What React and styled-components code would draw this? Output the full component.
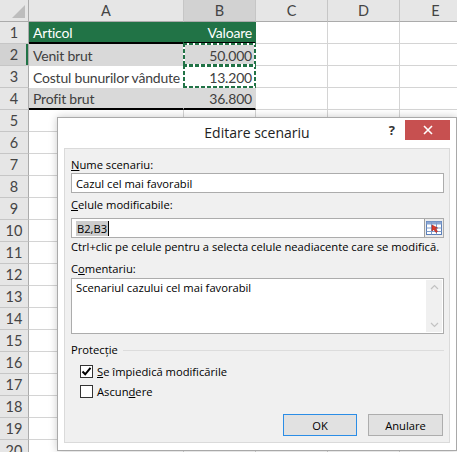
import React from "react"
import styled, { createGlobalStyle, css } from "styled-components"

const GREEN = "#217346"
const GRID_LINE = "#d4d4d4"

const GlobalStyle = createGlobalStyle`
  html, body {
    margin: 0;
    padding: 0;
    background: #fff;
  }
  body {
    overflow: hidden;
  }
`

const Sheet = styled.div`
  position: relative;
  width: 457px;
  height: 452px;
  overflow: hidden;
  background: #fff;
  font-family: Lato, "Liberation Sans", sans-serif;
`

const Grid = styled.div`
  display: grid;
  grid-template-columns: 29px 155px 72px 72px 72px 72px;
  grid-auto-rows: 22px;
`

const Corner = styled.div`
  position: relative;
  box-sizing: border-box;
  background: #e6e6e6;
  border-right: 1px solid #ababab;
  border-bottom: 1px solid #ababab;

  &::after {
    content: "";
    position: absolute;
    right: 3px;
    bottom: 3px;
    border-style: solid;
    border-width: 0 0 13px 13px;
    border-color: transparent transparent #bdbdbd transparent;
  }
`

const ColHead = styled.div`
  box-sizing: border-box;
  display: flex;
  align-items: center;
  justify-content: center;
  background: ${p => (p.$active ? "#d2d2d2" : "#e6e6e6")};
  border-right: 1px solid #c6c6c6;
  border-bottom: 1px solid #ababab;
  color: #444;
  font-size: 14.5px;
`

const RowHead = styled.div`
  box-sizing: border-box;
  display: flex;
  align-items: center;
  justify-content: center;
  background: ${p => (p.$active ? "#d2d2d2" : "#e6e6e6")};
  border-right: 1px solid #ababab;
  border-bottom: 1px solid #c6c6c6;
  color: #444;
  font-size: 14.5px;
  ${p => p.$active && css`box-shadow: inset -2px 0 0 ${GREEN};`}
`

const fills = {
  head: GREEN,
  gray: "#d9d9d9",
  white: "#fff",
}

const Cell = styled.div`
  position: relative;
  box-sizing: border-box;
  display: flex;
  align-items: center;
  justify-content: ${p => (p.$right ? "flex-end" : "flex-start")};
  padding: 1px 3px 0 4px;
  white-space: nowrap;
  overflow: visible;
  font-size: 14px;
  letter-spacing: -0.2px;
  background: ${p => (p.$fill ? fills[p.$fill] : "#fff")};
  color: ${p => (p.$fill === "head" ? "#fff" : "#404040")};
  border-right: 1px solid ${p => (p.$fill ? fills[p.$fill] : GRID_LINE)};
  border-bottom: ${p =>
    p.$rule ? "2px solid #000" : `1px solid ${p.$fill ? fills[p.$fill] : GRID_LINE}`};

  ${p => p.$ants && css`
    &::after {
      content: "";
      position: absolute;
      inset: -1px -1px -1px -1px;
      pointer-events: none;
      background:
        repeating-linear-gradient(90deg, ${GREEN} 0 4px, #fff 4px 6px) top / 100% 2px no-repeat,
        repeating-linear-gradient(90deg, ${GREEN} 0 4px, #fff 4px 6px) bottom / 100% 2px no-repeat,
        repeating-linear-gradient(180deg, ${GREEN} 0 4px, #fff 4px 6px) left / 2px 100% no-repeat,
        repeating-linear-gradient(180deg, ${GREEN} 0 4px, #fff 4px 6px) right / 2px 100% no-repeat;
    }
  `}
`

/* ---------- dialog ---------- */

const Dialog = styled.div`
  position: absolute;
  left: 57px;
  top: 117px;
  width: 400px;
  height: 334px;
  box-sizing: border-box;
  display: flex;
  flex-direction: column;
  padding: 0 6px 7px;
  background: #fff;
  border: 1px solid #a9a9a9;
  box-shadow: 0 0 8px rgba(0, 0, 0, 0.22);
  font-family: "Open Sans", "Noto Sans", sans-serif;
  font-size: 11.2px;
  color: #000;
`

const TitleBar = styled.div`
  height: 30px;
  display: grid;
  grid-template-columns: 1fr auto 1fr;
  align-items: start;
`

const Title = styled.div`
  grid-column: 2;
  line-height: 30px;
  font-size: 14px;
  color: #222;
`

const TitleControls = styled.div`
  grid-column: 3;
  justify-self: end;
  display: flex;
  align-items: center;
  gap: 10px;
  margin-top: 2px;
`

const Help = styled.span`
  font-size: 13px;
  font-weight: 700;
  color: #333;
`

const Close = styled.div`
  width: 45px;
  height: 20px;
  display: flex;
  align-items: center;
  justify-content: center;
  background: #c75050;
`

const Panel = styled.div`
  flex: 1;
  display: flex;
  flex-direction: column;
  padding: 8px 5px 0 6px;
  background: #f0f0f0;
  border: 1px solid #dadada;
`

const Label = styled.div`
  line-height: 16px;
  margin-top: ${p => p.$mt || 0}px;
  white-space: nowrap;
`

const Field = styled.div`
  box-sizing: border-box;
  display: flex;
  align-items: center;
  height: 20px;
  margin-top: ${p => p.$mt || 0}px;
  padding-left: 4px;
  background: #fff;
  border: 1px solid #acacac;
`

const Selected = styled.span`
  background: #cccccc;
  padding: 0 1px;
  border-right: 1px solid #000;
`

const Picker = styled.div`
  box-sizing: border-box;
  margin-left: auto;
  width: 19px;
  height: 18px;
  display: flex;
  align-items: center;
  justify-content: center;
  background: #ececec;
  border-left: 1px solid #a0a0a0;
`

const Memo = styled.div`
  box-sizing: border-box;
  display: flex;
  height: 56px;
  margin-top: 1px;
  background: #fff;
  border: 1px solid #acacac;
`

const MemoText = styled.div`
  flex: 1;
  padding: 1px 4px;
  line-height: 16px;
`

const ScrollTrack = styled.div`
  width: 16px;
  margin: 1px 1px 1px 0;
  display: flex;
  flex-direction: column;
  justify-content: space-between;
  align-items: center;
  padding: 4px 0;
  box-sizing: border-box;
  background: #f0f0f0;
`

const GroupHead = styled.div`
  display: flex;
  align-items: center;
  gap: 5px;
  margin-top: 8px;
  line-height: 16px;

  &::after {
    content: "";
    flex: 1;
    height: 1px;
    background: #dcdcdc;
  }
`

const CheckRow = styled.label`
  display: flex;
  align-items: center;
  gap: 4px;
  height: 20px;
  padding-left: 9px;
  margin-top: ${p => p.$mt || 0}px;
`

const Box = styled.span`
  box-sizing: border-box;
  width: 13px;
  height: 13px;
  display: flex;
  align-items: center;
  justify-content: center;
  background: #fff;
  border: 1px solid #333;
`

const Buttons = styled.div`
  display: flex;
  justify-content: flex-end;
  gap: 11px;
  margin-top: 13px;
  margin-right: 1px;
`

const Button = styled.div`
  box-sizing: border-box;
  width: ${p => p.$w}px;
  height: 22px;
  display: flex;
  align-items: center;
  justify-content: center;
  background: #e1e1e1;
  border: 1px solid ${p => (p.$primary ? "#2b8de6" : "#adadad")};
`

const rows = [
  { a: "Articol", b: "Valoare", fill: "head", rule: true },
  { a: "Venit brut", b: "50.000", fill: "gray", ants: true },
  { a: "Costul bunurilor vândute", b: "13.200", fill: "white", ants: true },
  { a: "Profit brut", b: "36.800", fill: "gray", rule: true },
]

const Check = () => (
  <svg width="11" height="11" viewBox="0 0 11 11">
    <path d="M1.5 5.5 L4.2 8.3 L9.5 1.8" fill="none" stroke="#000" strokeWidth="2" />
  </svg>
)

const Chevron = ({ up }) => (
  <svg width="9" height="6" viewBox="0 0 9 6">
    <path
      d={up ? "M1 5 L4.5 1.5 L8 5" : "M1 1 L4.5 4.5 L8 1"}
      fill="none"
      stroke="#c2c2c2"
      strokeWidth="1.2"
    />
  </svg>
)

// range picker: small blue table with a red arrow
const RangeIcon = () => (
  <svg width="16" height="14" viewBox="0 0 16 14">
    <rect x="0.5" y="0.5" width="15" height="13" fill="#fff" stroke="#5b7fb8" />
    <rect x="0.5" y="0.5" width="15" height="3" fill="#8aa6d2" />
    <path d="M0.5 7 H15.5 M0.5 10.5 H15.5 M5.5 0.5 V13.5 M10.5 0.5 V13.5" stroke="#7d9bcb" />
    <path d="M6 4 L6 10 L7.8 8.4 L10 11.5 L11.5 10.4 L9.3 7.4 L11.6 7 Z" fill="#e0392b" stroke="#a4231a" strokeWidth="0.6" />
  </svg>
)

const App = () => {
  const body = []
  for (let n = 1; n <= 20; n++) {
    const r = rows[n - 1]
    body.push(
      <RowHead key={`h${n}`} $active={n === 2}>{n}</RowHead>,
      <Cell key={`a${n}`} $fill={r?.fill} $rule={r?.rule}>{r?.a}</Cell>,
      <Cell key={`b${n}`} $fill={r?.fill} $rule={r?.rule} $ants={r?.ants} $right>{r?.b}</Cell>,
      <Cell key={`c${n}`} />,
      <Cell key={`d${n}`} />,
      <Cell key={`e${n}`} />
    )
  }

  return (
    <>
      <GlobalStyle />
      <Sheet>
        <Grid>
          <Corner />
          <ColHead>A</ColHead>
          <ColHead $active>B</ColHead>
          <ColHead>C</ColHead>
          <ColHead>D</ColHead>
          <ColHead>E</ColHead>
          {body}
        </Grid>

        <Dialog>
          <TitleBar>
            <Title>Editare scenariu</Title>
            <TitleControls>
              <Help>?</Help>
              <Close>
                <svg width="10" height="10" viewBox="0 0 10 10">
                  <path d="M1 1 L9 9 M9 1 L1 9" stroke="#fff" strokeWidth="1.6" />
                </svg>
              </Close>
            </TitleControls>
          </TitleBar>

          <Panel>
            <Label><u>N</u>ume scenariu:</Label>
            <Field>Cazul cel mai favorabil</Field>

            <Label $mt={4}><u>C</u>elule modificabile:</Label>
            <Field $mt={5}>
              <Selected>B2,B3</Selected>
              <Picker><RangeIcon /></Picker>
            </Field>

            <Label $mt={1}>Ctrl+clic pe celule pentru a selecta celule neadiacente care se modifică.</Label>

            <Label $mt={6}>C<u>o</u>mentariu:</Label>
            <Memo>
              <MemoText>Scenariul cazului cel mai favorabil</MemoText>
              <ScrollTrack>
                <Chevron up />
                <Chevron />
              </ScrollTrack>
            </Memo>

            <GroupHead>Protecție</GroupHead>
            <CheckRow $mt={3}>
              <Box><Check /></Box>
              <span><u>S</u>e împiedică modificările</span>
            </CheckRow>
            <CheckRow>
              <Box />
              <span>Ascun<u>d</u>ere</span>
            </CheckRow>

            <Buttons>
              <Button $primary $w={74}>OK</Button>
              <Button $w={75}>Anulare</Button>
            </Buttons>
          </Panel>
        </Dialog>
      </Sheet>
    </>
  )
}

export default App
